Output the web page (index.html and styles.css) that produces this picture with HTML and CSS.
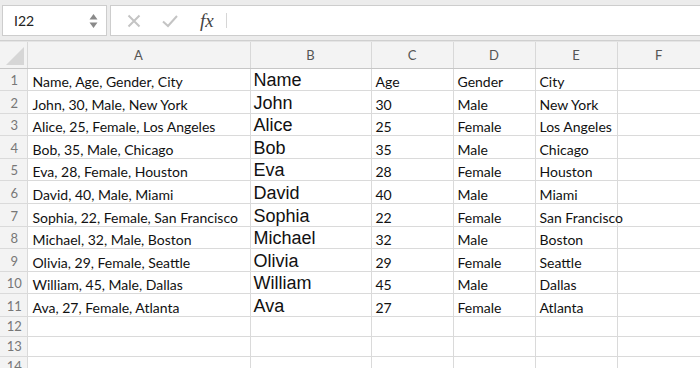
FILE: index.html
```html
<!DOCTYPE html>
<html lang="en">
<head>
    <meta charset="UTF-8">
    <title>Sheet</title>
    <link rel="stylesheet" href="styles.css">
</head>
<body>
    <!-- name box + formula bar -->
    <div class="toolbar">
        <div class="name-box">
            <span class="cell-ref">I22</span>
            <span class="spinner">
                <svg width="9" height="18" viewBox="0 0 9 18"><path d="M4.5 2 L8.5 7.5 H0.5 Z M4.5 16 L8.5 10.5 H0.5 Z" fill="#8a8a8a"/></svg>
            </span>
        </div>
        <div class="formula-bar">
            <div class="fx-tools">
                <svg class="tool" width="16" height="16" viewBox="0 0 16 16"><path d="M2.5 2.5 L13.5 13.5 M13.5 2.5 L2.5 13.5" stroke="#c4c4c4" stroke-width="2"/></svg>
                <svg class="tool" width="18" height="16" viewBox="0 0 18 16"><path d="M2 8.5 L7 13 L16 3" stroke="#c4c4c4" stroke-width="2" fill="none"/></svg>
                <span class="fx">fx</span>
            </div>
            <div class="formula-input"></div>
        </div>
    </div>

    <div class="sheet">
        <table class="grid">
            <colgroup>
                <col class="c-rh"><col class="c-a"><col class="c-b"><col class="c-c"><col class="c-d"><col class="c-e"><col class="c-f">
            </colgroup>
            <thead>
                <tr class="col-heads">
                    <th class="corner"><span class="tri"></span></th>
                    <th>A</th><th>B</th><th>C</th><th>D</th><th>E</th><th>F</th>
                </tr>
            </thead>
            <tbody id="rows"></tbody>
        </table>
    </div>

    <script>
        const data = [
            ['Name', 'Age', 'Gender', 'City'],
            ['John', '30', 'Male', 'New York'],
            ['Alice', '25', 'Female', 'Los Angeles'],
            ['Bob', '35', 'Male', 'Chicago'],
            ['Eva', '28', 'Female', 'Houston'],
            ['David', '40', 'Male', 'Miami'],
            ['Sophia', '22', 'Female', 'San Francisco'],
            ['Michael', '32', 'Male', 'Boston'],
            ['Olivia', '29', 'Female', 'Seattle'],
            ['William', '45', 'Male', 'Dallas'],
            ['Ava', '27', 'Female', 'Atlanta']
        ];

        const tbody = document.getElementById('rows');
        for (let i = 0; i < 14; i++) {
            const tr = document.createElement('tr');
            const row = data[i];
            tr.className = row ? 'data-row' : 'empty-row';
            let html = '<td class="rh">' + (i + 1) + '</td>';
            if (row) {
                html += '<td class="csv">' + row.join(', ') + '</td>';
                html += '<td class="big">' + row[0] + '</td>';
                html += '<td>' + row[1] + '</td><td>' + row[2] + '</td>';
                html += '<td>' + row[3] + '</td><td></td>';
            } else {
                html += '<td></td><td></td><td></td><td></td><td></td><td></td>';
            }
            tr.innerHTML = html;
            tbody.appendChild(tr);
        }
    </script>
</body>
</html>
```

FILE: styles.css
```css
* {
    margin: 0;
    padding: 0;
    box-sizing: border-box;
}

body {
    width: 700px;
    height: 368px;
    overflow: hidden;
    background: #fff;
    font-family: Lato, "Open Sans", sans-serif;
    color: #111;
}

/* top bar */
.toolbar {
    display: flex;
    height: 41px;
    padding: 5px 0 4px 2px;
    gap: 3px;
    background: #ececec;
    border-bottom: 1px solid #cfcfcf;
}

.name-box {
    width: 105px;
    display: flex;
    align-items: center;
    justify-content: space-between;
    padding: 0 8px 0 11px;
    background: #fff;
    border: 1px solid #cdcdcd;
}

.cell-ref {
    font-size: 14px;
    color: #222;
}

.spinner svg {
    display: block;
}

.formula-bar {
    flex: 1;
    display: flex;
    background: #fff;
    border: 1px solid #cdcdcd;
    border-right: none;
}

.fx-tools {
    display: flex;
    align-items: center;
    gap: 19px;
    padding: 0 12px 0 15px;
    border-right: 1px solid #d6d6d6;
    margin: 7px 0;
}

.tool {
    display: block;
}

.fx {
    font-family: "Liberation Serif", serif;
    font-style: italic;
    font-size: 19px;
    color: #444;
    margin-left: 2px;
}

.formula-input {
    flex: 1;
}

/* grid */
.sheet {
    border-top: 1px solid #e4e4e4;
}

.grid {
    border-collapse: collapse;
    table-layout: fixed;
    width: 700px;
}

.c-rh { width: 27px; }
.c-a { width: 223px; }
.c-b { width: 121px; }
.c-c { width: 82px; }
.c-d { width: 82px; }
.c-e { width: 82px; }
.c-f { width: 83px; }

.col-heads th {
    height: 26px;
    font-weight: normal;
    font-size: 13px;
    color: #555;
    background: #f3f3f3;
    border-left: 1px solid #d8d8d8;
    border-bottom: 1px solid #c6c6c6;
    text-align: center;
}

.col-heads .corner {
    border-left: none;
    position: relative;
}

.tri {
    position: absolute;
    right: 3px;
    bottom: 3px;
    width: 0;
    height: 0;
    border-left: 18px solid transparent;
    border-bottom: 18px solid #d6d6d6;
}

td {
    border: 1px solid #dadada;
    border-top: none;
    font-size: 14px;
    padding: 0 4px 0 4px;
    vertical-align: bottom;
    white-space: nowrap;
    overflow: visible;
    line-height: 17px;
}

.data-row td {
    height: 22.6px;
}

.empty-row td {
    height: 20px;
}

td.rh {
    border-left: none;
    background: #f3f3f3;
    color: #777;
    font-size: 13px;
    text-align: center;
    padding: 0 0 1px 2px;
}

td.csv {
    padding-left: 5px;
}

td.big {
    font-family: "Liberation Sans", Arial, sans-serif;
    font-size: 18px;
    line-height: 20px;
    padding-left: 3px;
    padding-bottom: 0;
}
```
